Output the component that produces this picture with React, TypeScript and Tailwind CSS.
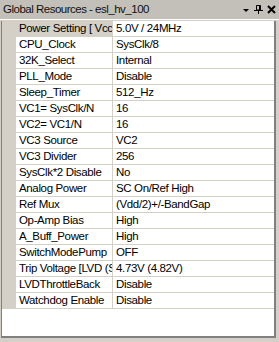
const ROWS: [string, string][] = [
  ['Power Setting [ Vcc / SysClk freq ]', '5.0V / 24MHz'],
  ['CPU_Clock', 'SysClk/8'],
  ['32K_Select', 'Internal'],
  ['PLL_Mode', 'Disable'],
  ['Sleep_Timer', '512_Hz'],
  ['VC1= SysClk/N', '16'],
  ['VC2= VC1/N', '16'],
  ['VC3 Source', 'VC2'],
  ['VC3 Divider', '256'],
  ['SysClk*2 Disable', 'No'],
  ['Analog Power', 'SC On/Ref High'],
  ['Ref Mux', '(Vdd/2)+/-BandGap'],
  ['Op-Amp Bias', 'High'],
  ['A_Buff_Power', 'High'],
  ['SwitchModePump', 'OFF'],
  ['Trip Voltage [LVD (SMP)]', '4.73V (4.82V)'],
  ['LVDThrottleBack', 'Disable'],
  ['Watchdog Enable', 'Disable'],
];

function TitleIcons() {
  return (
    <div className="flex items-center gap-[4px] pr-[3px]">
      <svg width="8" height="8" viewBox="0 0 8 8" className="mt-[3px]">
        <path d="M1 2h6L4 5z" fill="#000" />
      </svg>
      <svg width="9" height="9" viewBox="0 0 9 9">
        <path d="M2.5 0.5h4v4.5h-4z" fill="none" stroke="#000" />
        <path d="M5 1h1v4h-1z" fill="#000" />
        <path d="M0 5h9v1H0z" fill="#000" />
        <path d="M4 6h1v3H4z" fill="#000" />
      </svg>
      <svg width="9" height="9" viewBox="0 0 9 9">
        <path d="M1 1l7 7M8 1L1 8" stroke="#000" strokeWidth="2" />
      </svg>
    </div>
  );
}

export default function App() {
  return (
    <div className="w-[279px] h-[342px] bg-[#d4d0c8] font-['Liberation_Sans',sans-serif] text-[11.5px] tracking-[-0.35px] text-black flex flex-col">
      <div className="h-[19px] bg-[#c3c0b9] flex items-center justify-between">
        <span className="pl-[3px] text-[11.5px] tracking-[-0.5px] text-[#111]">Global Resources - esl_hv_100</span>
        <TitleIcons />
      </div>
      <div className="h-px bg-white" />
      <div className="h-px bg-[#d4d0c8]" />
      <div className="ml-px w-[275px] h-[317px] bg-white border-l border-r-2 border-b-2 border-[#808080] flex flex-col">
        {ROWS.map(([name, value], i) => (
          <div key={name} className="flex h-[16px]">
            <div className="w-[14px] bg-[#d4d0c8]" />
            <div
              className={`w-[97px] border-r border-b border-[#d4d0c8] pl-[3px] leading-[15px] overflow-hidden whitespace-nowrap ${
                i === 0 ? 'bg-[#d4d0c8]' : 'bg-white'
              }`}
            >
              {name}
            </div>
            <div className="flex-1 border-b border-[#d4d0c8] pl-[3px] leading-[15px] overflow-hidden whitespace-nowrap">
              {value}
            </div>
          </div>
        ))}
      </div>
    </div>
  );
}
